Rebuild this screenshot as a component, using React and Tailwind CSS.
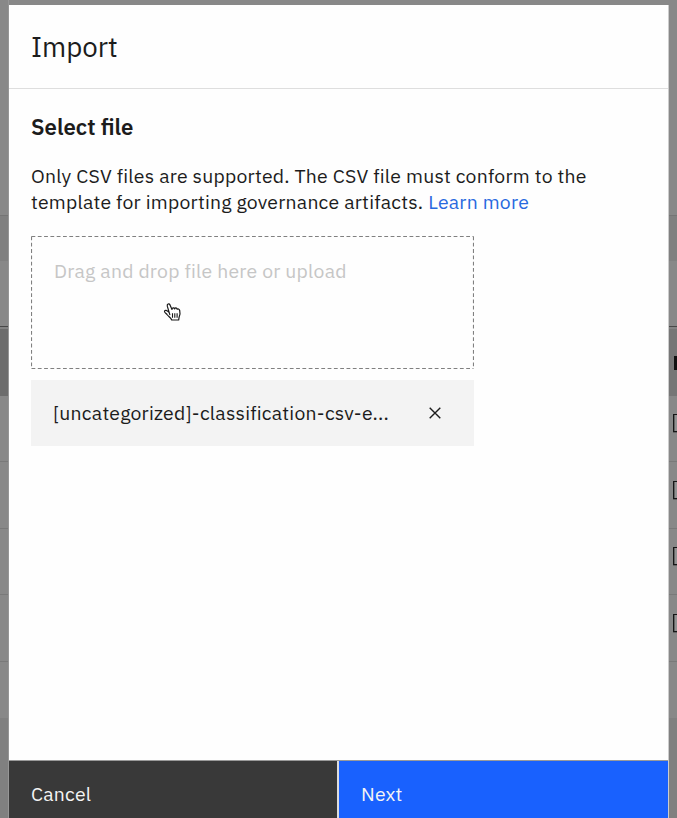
import React from "react";

function Backdrop({ right = false }) {
  return (
    <div className="flex h-[818px] w-full flex-col bg-[#888888]">
      <div className="h-[215px] shrink-0" />
      <div className="h-px shrink-0 bg-[#757575]" />
      <div className="h-[45px] shrink-0 bg-[#808080]" />
      <div className="h-[65px] shrink-0" />
      <div className="h-px shrink-0 bg-[#484848]" />
      <div className="h-[2px] shrink-0 bg-[#838383]" />
      <div className={`flex h-[67px] shrink-0 justify-end pt-[27px] ${right ? "bg-[#767676]" : "bg-[#6c6c6c]"}`}>
        {right && <div className="h-[14px] w-[3px] bg-[#111111]" />}
      </div>
      {["a", "b", "c", "d"].map((row) => (
        <div key={row} className="flex h-[66.4px] shrink-0 justify-end border-b border-[#797979] pt-[18.4px]">
          {right && <div className="h-[18px] w-[4px] border-y border-l border-[#161616] bg-[#929292] shadow-[inset_1px_0_0_#636363,0_1px_0_#636363]" />}
        </div>
      ))}
      <div className="h-[56px] shrink-0" />
      <div className="flex-1 bg-[#808080]" />
    </div>
  );
}

function HandCursor() {
  return (
    <svg className="absolute left-[163px] top-[302px]" width="19" height="20" viewBox="0 0 19 20" fill="none">
      <path
        d="M6.8 12.6 4.3 4.2C3.8 2.2 6 1 7 2.9L9 7.5C9 5.5 11 5.2 11.7 6.9C12 5.4 13.6 5.6 14.2 7.3C14.8 6.3 16.3 6.9 16.7 8.5C17.3 11 17.3 13 16.1 15.2L15.7 18H8.7C7.8 15.8 5.8 14.8 4.4 13C3.4 11.6 1.4 10.7 1.5 9.4C1.8 7.7 4 8.2 5.8 10.2"
        fill="white"
        stroke="#171717"
        strokeWidth="1.2"
        strokeLinejoin="round"
        strokeLinecap="round"
      />
      <path d="M9.5 11.3V15.7M11.8 11.3V15.7M14.1 11.3V15.7" stroke="#171717" strokeWidth="1.1" />
    </svg>
  );
}

export default function App() {
  return (
    <div className="relative flex h-[818px] w-[677px] overflow-hidden bg-[#888888] font-['IBM_Plex_Sans','Open_Sans',sans-serif] text-[19.4px] tracking-[0.22px] text-[#1c1c1c]">
      <div className="w-[9px] shrink-0 border-r border-[#969696]">
        <Backdrop />
      </div>
      <main className="mt-[5px] flex w-[660px] shrink-0 flex-col border-r border-[#cccccc] bg-[#fefefe]">
        <header className="h-[84px] shrink-0 border-b border-[#dedede] pl-[22px] pt-[24px]">
          <h1 className="whitespace-nowrap text-[27.7px] leading-[36px] tracking-normal">Import</h1>
        </header>
        <section className="flex flex-1 flex-col items-start pl-[22px] pt-[24px]">
          <h2 className="text-[22.2px] font-semibold leading-[28px] tracking-normal">Select file</h2>
          <p className="mt-[22px] whitespace-nowrap leading-[26px]">
            Only CSV files are supported. The CSV file must conform to the
            <br />
            template for importing governance artifacts. <a className="text-[#2869df]">Learn more</a>
          </p>
          <div className="relative mt-[21px] h-[133px] w-[443px] pl-[23px] pt-[22px]">
            <svg className="absolute inset-0" width="443" height="133" fill="none" stroke="#808080" strokeWidth="1.15">
              <path d="M.5.5H442.5M.5 132.5H442.5M.5.5V132.5M442.5.5V132.5" strokeDasharray="3.8 2.5" />
            </svg>
            <span className="block leading-[26px] text-[#c6c6c6]">Drag and drop file here or upload</span>
          </div>
          <div className="mt-[11px] flex h-[66px] w-[443px] items-center justify-between bg-[#f3f3f3] pl-[22px] pr-[33px]">
            <span className="whitespace-nowrap">[uncategorized]-classification-csv-e...</span>
            <svg width="12" height="12" viewBox="0 0 12 12" stroke="#1c1c1c" strokeWidth="1.4">
              <path d="m.7.7 10.6 10.6M11.3.7.7 11.3" />
            </svg>
          </div>
        </section>
        <footer className="flex h-[58px] shrink-0 border-t border-[#9a9a9a] text-[#f4f4f4]">
          <div className="w-[328px] bg-[#393939] pl-[22px] pt-[20px] leading-[26px]">Cancel</div>
          <div className="w-[2px] bg-[#dddddd]" />
          <div className="flex-1 bg-[#1961fe] pl-[22px] pt-[20px] leading-[26px]">Next</div>
        </footer>
      </main>
      <div className="w-[8px] shrink-0">
        <Backdrop right />
      </div>
      <HandCursor />
    </div>
  );
}
